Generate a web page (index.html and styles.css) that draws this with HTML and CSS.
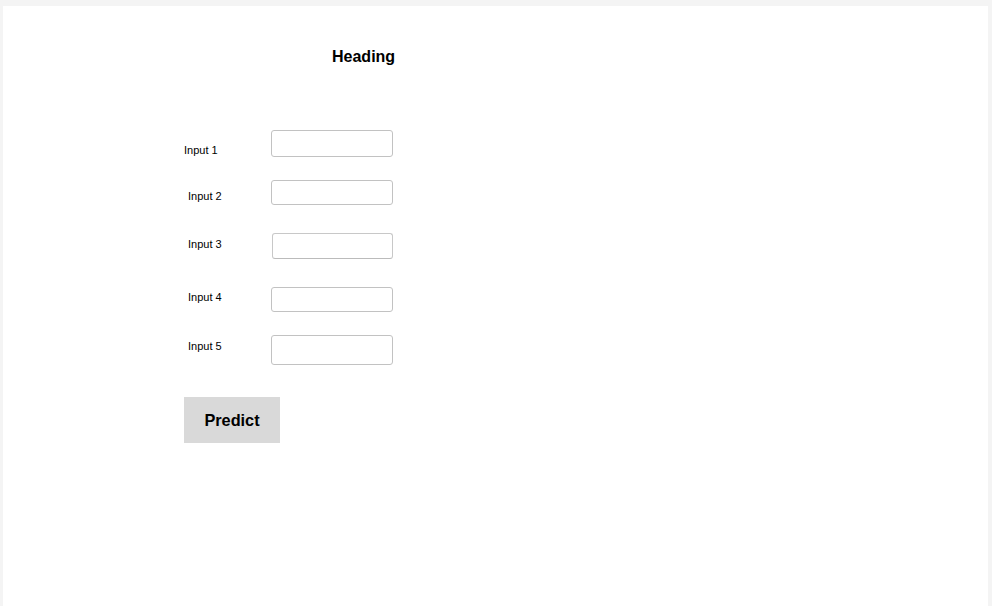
FILE: index.html
```html
<!DOCTYPE html>
<html lang="en">
<head>
<meta charset="utf-8">
<title>Form</title>
<link rel="stylesheet" href="styles.css">
</head>
<body>
<main class="panel">
  <h1 class="heading">Heading</h1>
  <form class="form">
    <div class="row row-1">
      <label class="label" for="in1">Input 1</label>
      <input class="field" id="in1" type="text">
    </div>
    <div class="row row-2">
      <label class="label" for="in2">Input 2</label>
      <input class="field" id="in2" type="text">
    </div>
    <div class="row row-3">
      <label class="label" for="in3">Input 3</label>
      <input class="field" id="in3" type="text">
    </div>
    <div class="row row-4">
      <label class="label" for="in4">Input 4</label>
      <input class="field" id="in4" type="text">
    </div>
    <div class="row row-5">
      <label class="label" for="in5">Input 5</label>
      <input class="field" id="in5" type="text">
    </div>
    <button class="predict" type="button">Predict</button>
  </form>
</main>
</body>
</html>
```

FILE: styles.css
```css
html, body {
  margin: 0;
  padding: 0;
  height: 100%;
}

body {
  background: #f4f4f4;
  font-family: "Liberation Sans", Arial, sans-serif;
  color: #000;
}

.panel {
  box-sizing: border-box;
  margin: 6px 4px 0 3px;
  min-height: 600px;
  background: #ffffff;
  padding: 42px 0 0 181px;
}

.heading {
  margin: 0 0 0 148px;
  font-size: 16px;
  line-height: 18px;
  font-weight: bold;
}

.form {
  display: flex;
  flex-direction: column;
  align-items: flex-start;
  margin-top: 64px;
}

.row {
  display: flex;
  align-items: flex-start;
}

.label {
  box-sizing: border-box;
  width: 87px;
  font-size: 11px;
  line-height: 13px;
  color: #000;
}

.field {
  box-sizing: border-box;
  width: 122px;
  margin: 0;
  border: 1px solid #c2c2c2;
  border-radius: 3px;
  background: #fff;
  padding: 0 4px;
  outline: none;
}

.row-1 .label { margin-top: 14px; }
.row-1 .field { height: 27px; }

.row-2 { margin-top: 23px; }
.row-2 .label { margin-top: 10px; padding-left: 4px; }
.row-2 .field { height: 25px; }

.row-3 { margin-top: 28px; }
.row-3 .label { margin-top: 5px; padding-left: 4px; }
.row-3 .field { height: 26px; width: 121px; margin-left: 1px; border-color: #c8c8c8; border-bottom-color: #bbbbbb; }

.row-4 { margin-top: 28px; }
.row-4 .label { margin-top: 4px; padding-left: 4px; }
.row-4 .field { height: 25px; }

.row-5 { margin-top: 23px; }
.row-5 .label { margin-top: 5px; padding-left: 4px; }
.row-5 .field { height: 30px; }

.predict {
  margin-top: 32px;
  width: 96px;
  height: 46px;
  border: none;
  background: #d9d9d9;
  font-family: "Liberation Sans", Arial, sans-serif;
  font-size: 16.3px;
  font-weight: bold;
  color: #000;
  padding: 1px 0 0 0;
}
```
